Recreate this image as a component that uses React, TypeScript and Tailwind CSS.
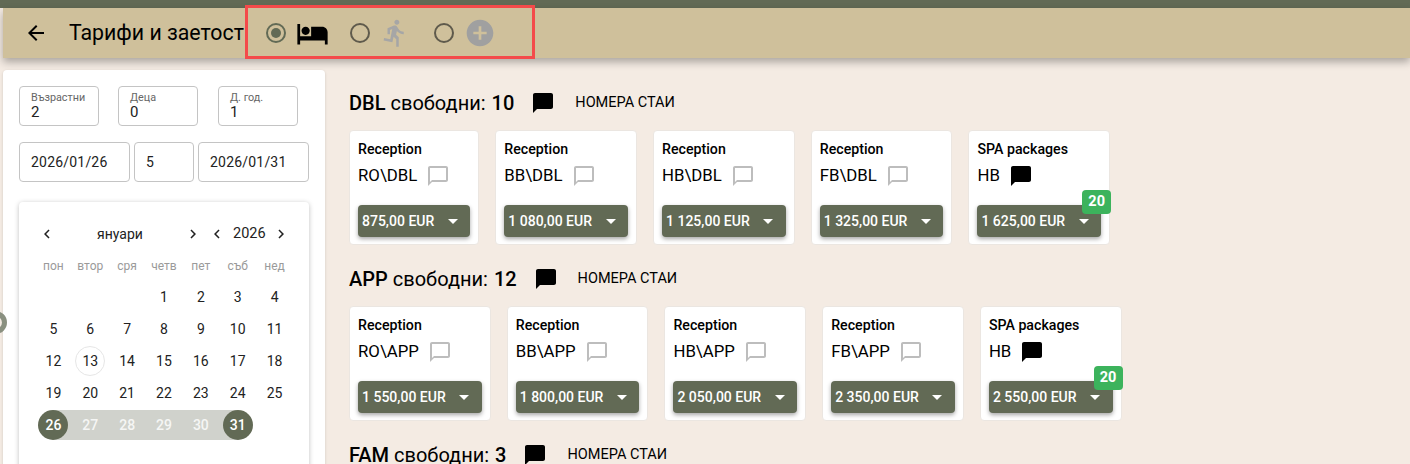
import React from "react";
import {
  MdArrowBack,
  MdHotel,
  MdDirectionsRun,
  MdAddCircle,
  MdChatBubble,
  MdChatBubbleOutline,
  MdArrowDropDown,
  MdChevronLeft,
  MdChevronRight,
} from "react-icons/md";

type Rate = { top: string; name: string; price: string; filled?: boolean; badge?: string };

const dbl: Rate[] = [
  { top: "Reception", name: "RO\\DBL", price: "875,00 EUR" },
  { top: "Reception", name: "BB\\DBL", price: "1 080,00 EUR" },
  { top: "Reception", name: "HB\\DBL", price: "1 125,00 EUR" },
  { top: "Reception", name: "FB\\DBL", price: "1 325,00 EUR" },
  { top: "SPA packages", name: "HB", price: "1 625,00 EUR", filled: true, badge: "20" },
];
const app: Rate[] = [
  { top: "Reception", name: "RO\\APP", price: "1 550,00 EUR" },
  { top: "Reception", name: "BB\\APP", price: "1 800,00 EUR" },
  { top: "Reception", name: "HB\\APP", price: "2 050,00 EUR" },
  { top: "Reception", name: "FB\\APP", price: "2 350,00 EUR" },
  { top: "SPA packages", name: "HB", price: "2 550,00 EUR", filled: true, badge: "20" },
];

function Radio({ on }: { on?: boolean }) {
  return (
    <span
      className={`flex h-5 w-5 items-center justify-center rounded-full border-2 ${
        on ? "border-[#626a55]" : "border-[#5f5a4c]"
      }`}
    >
      {on && <span className="h-[10px] w-[10px] rounded-full bg-[#626a55]" />}
    </span>
  );
}

function Card({ r }: { r: Rate }) {
  return (
    <div className="h-[115px] rounded-[4px] border border-[#ebe6e1] bg-white px-[8px] pt-[8px]">
      <div className="text-[14.2px] leading-[20px] font-medium text-black">{r.top}</div>
      <div className="mt-[2px] flex h-[30px] items-center text-[16.8px] text-black">
        <span>{r.name}</span>
        <span className="ml-[9px] flex items-center">
          {r.filled ? (
            <MdChatBubble className="text-[24px] text-black" />
          ) : (
            <MdChatBubbleOutline className="text-[24px] text-[#bdbdbd]" />
          )}
        </span>
      </div>
      <div className="relative mt-[14px]">
        <div className="flex h-[32px] items-center rounded-[4px] bg-[#626a55] pl-[4px] pr-[5.5px] text-[14px] font-medium text-white shadow-[0_2px_4px_rgba(0,0,0,0.35)]">
          <span className="whitespace-nowrap">{r.price}</span>
          <MdArrowDropDown className="ml-[6.5px] text-[24px] text-white" />
        </div>
        {r.badge && (
          <span className="absolute -right-[10px] -top-[15px] flex h-[24px] w-[29px] items-center justify-center rounded-[4px] bg-[#3cb35c] text-[14.5px] font-bold text-white">
            {r.badge}
          </span>
        )}
      </div>
    </div>
  );
}

function Section({ code, free, rates, gap }: { code: string; free: string; rates: Rate[]; gap?: boolean }) {
  return (
    <section className={gap ? "mt-[20px]" : ""}>
      <div className="flex h-[28px] items-center text-black">
        <span className="text-[20px] font-medium">{code}</span>
        <span className="ml-[5px] text-[20px]">свободни:</span>
        <span className="ml-[6px] text-[20px] font-medium">{free}</span>
        <MdChatBubble className="ml-[17px] text-[24px]" />
        <span className="ml-[20px] text-[14.5px]">НОМЕРА СТАИ</span>
      </div>
      <div className="mt-[13px] flex gap-[16px]">
        {rates.map((r) => (
          <Card key={r.name + r.price} r={r} />
        ))}
      </div>
    </section>
  );
}

function Small({ label, value, w }: { label: string; value: string; w: string }) {
  return (
    <div className={`h-[40px] ${w} rounded-[4px] border border-[#c4c4c4] pl-[11px] pt-[4px]`}>
      <div className="text-[10.8px] leading-[13px] text-[#666]">{label}</div>
      <div className="text-[15px] leading-[16px] text-[#222]">{value}</div>
    </div>
  );
}

function Box({ value, w }: { value: string; w: string }) {
  return (
    <div className={`flex h-[40px] ${w} items-center rounded-[4px] border border-[#c4c4c4] pl-[11px] text-[14px] tracking-[0.2px] text-[#222]`}>
      {value}
    </div>
  );
}

const weekdays = ["пон", "втор", "сря", "четв", "пет", "съб", "нед"];
const rows: (number | null)[][] = [
  [null, null, null, 1, 2, 3, 4],
  [5, 6, 7, 8, 9, 10, 11],
  [12, 13, 14, 15, 16, 17, 18],
  [19, 20, 21, 22, 23, 24, 25],
  [26, 27, 28, 29, 30, 31, null],
];

function Day({ d }: { d: number | null }) {
  if (d === null) return <div className="h-[32px]" />;
  const edge = d === 26 || d === 31;
  const range = d >= 26;
  return (
    <div className="relative flex h-[32px] items-center justify-center text-[14px] text-[#222]">
      {range && (
        <span
          className={`absolute top-[1px] h-[30px] bg-[#d0d2cc] ${
            d === 26 ? "left-1/2 right-0" : d === 31 ? "left-0 right-1/2" : "left-0 right-0"
          }`}
        />
      )}
      {edge && <span className="absolute left-1/2 top-[1px] -ml-[15px] h-[30px] w-[30px] rounded-full bg-[#626a55]" />}
      {d === 13 && <span className="absolute left-1/2 top-[1px] -ml-[15px] h-[30px] w-[30px] rounded-full border border-[#e6e6e6]" />}
      <span className={`relative ${range ? "font-medium text-white" : ""} ${range && !edge ? "opacity-80" : ""}`}>{d}</span>
    </div>
  );
}

export default function App() {
  return (
    <div
      className="relative h-[464px] w-[1410px] overflow-hidden bg-[#f4ebe3]"
      style={{ fontFamily: "Roboto, 'Liberation Sans', sans-serif" }}
    >
      <div className="h-[8px] bg-[#626a55]" />
      <header className="ml-[3px] flex h-[50px] items-center bg-[#cfc09b] shadow-[0_4px_8px_rgba(0,0,0,0.3)]">
        <MdArrowBack className="ml-[21px] text-[24px] text-black" />
        <span className="ml-[21px] w-[175px] overflow-hidden whitespace-nowrap text-[21.3px] text-black">Тарифи и заетост</span>
        <span className="ml-[22px] flex items-center">
          <Radio on />
          <MdHotel className="ml-[10px] text-[33px] text-black" />
          <span className="ml-[21px]"><Radio /></span>
          <MdDirectionsRun className="ml-[10px] text-[30px] text-[#a6a6a6]" />
          <span className="ml-[24px]"><Radio /></span>
          <MdAddCircle className="ml-[10px] text-[32px] text-[#a0a0a0]" />
        </span>
      </header>

      <div className="flex items-start">
        <aside className="ml-[3px] mt-[12px] h-[400px] w-[322px] shrink-0 rounded-[4px] bg-white px-[16px] pt-[16px] shadow-[0_1px_3px_rgba(0,0,0,0.15)]">
          <div className="flex gap-[19px]">
            <Small label="Възрастни" value="2" w="w-[80px]" />
            <Small label="Деца" value="0" w="w-[80px]" />
            <span className="ml-[1px]"><Small label="Д. год." value="1" w="w-[80px]" /></span>
          </div>
          <div className="mt-[16px] flex gap-[4px]">
            <Box value="2026/01/26" w="w-[111px]" />
            <Box value="5" w="w-[60px]" />
            <Box value="2026/01/31" w="w-[111px]" />
          </div>
          <div className="mt-[20px] h-[300px] w-[290px] rounded-[4px] bg-white px-[16px] pt-[20px] shadow-[0_1px_5px_rgba(0,0,0,0.25)]">
            <div className="relative flex h-[24px] items-center text-[14px] text-[#222]">
              <MdChevronLeft className="ml-[3px] text-[18px]" />
              <span className="w-[128px] text-center">януари</span>
              <MdChevronRight className="text-[18px]" />
              <MdChevronLeft className="ml-[6px] text-[18px]" />
              <span className="ml-[7px] w-[32px] text-center text-[14.5px]">2026</span>
              <MdChevronRight className="ml-[7px] text-[18px]" />
            </div>
            <div className="mt-[12px] grid grid-cols-7 text-center text-[12px] leading-[16px] text-[#9a9a9a]">
              {weekdays.map((w) => (
                <span key={w}>{w}</span>
              ))}
            </div>
            <div className="mt-[7px] grid grid-cols-7">
              {rows.flat().map((d, i) => (
                <Day key={i} d={d} />
              ))}
            </div>
          </div>
        </aside>

        <main className="ml-[24px] mt-[31px] min-w-0 flex-1">
          <Section code="DBL" free="10" rates={dbl} />
          <Section code="APP" free="12" rates={app} gap />
          <Section code="FAM" free="3" rates={[]} gap />
        </main>
      </div>

      <span className="absolute left-[-16px] top-[311px] h-[23px] w-[23px] rounded-full border-[5px] border-[#8a9080]" />
      <div className="pointer-events-none absolute left-[245px] top-[5px] h-[54px] w-[290px] border-[3px] border-[#f44a4a]" />
    </div>
  );
}
